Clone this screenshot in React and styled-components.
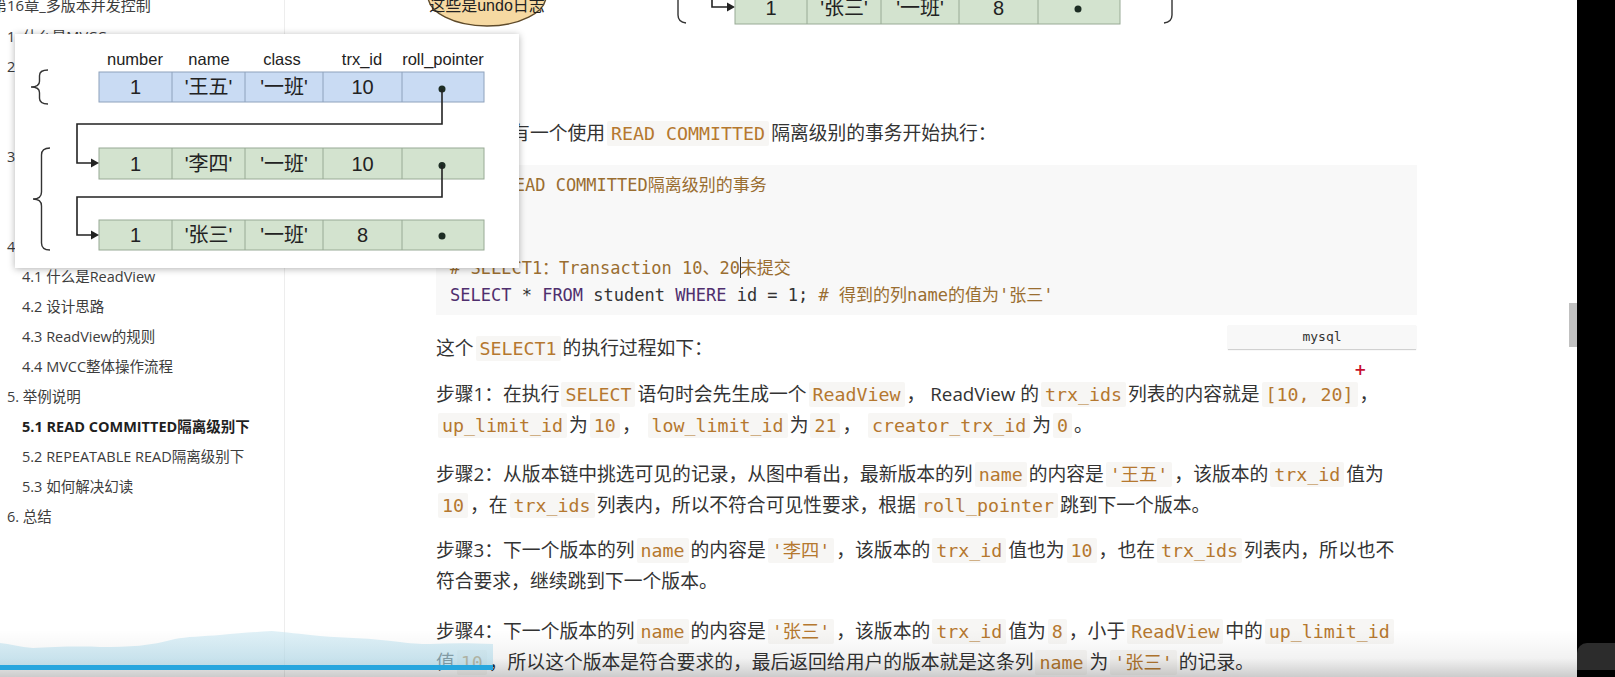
import React from 'react'
import styled, { createGlobalStyle } from 'styled-components'

const GlobalStyle = createGlobalStyle`
  html, body {
    margin: 0;
    padding: 0;
    background: #fff;
  }
  body {
    font-family: 'Open Sans', 'Noto Sans CJK SC', sans-serif;
  }
`

const outline = [
  { title: '1. 什么是MVCC', level: 1 },
  { title: '2. 快照读与当前读', level: 1 },
  { title: '2.1 快照读', level: 2 },
  { title: '2.2 当前读', level: 2 },
  { title: '3. 复习', level: 1 },
  { title: '3.1 再谈隔离级别', level: 2 },
  { title: '3.2 隐藏字段、Undo Log版本链', level: 2 },
  { title: '4. MVCC实现原理之ReadView', level: 1 },
  { title: '4.1 什么是ReadView', level: 2 },
  { title: '4.2 设计思路', level: 2 },
  { title: '4.3 ReadView的规则', level: 2 },
  { title: '4.4 MVCC整体操作流程', level: 2 },
  { title: '5. 举例说明', level: 1 },
  { title: '5.1 READ COMMITTED隔离级别下', level: 2, active: true },
  { title: '5.2 REPEATABLE READ隔离级别下', level: 2 },
  { title: '5.3 如何解决幻读', level: 2 },
  { title: '6. 总结', level: 1 }
]

const Screen = styled.div`
  position: relative;
  display: flex;
  width: 1615px;
  height: 677px;
  overflow: hidden;
  background: #fff;
`

const Sidebar = styled.aside`
  flex: none;
  width: 284px;
  border-right: 1px solid #ededed;
  color: #3c3c3c;
  font-size: 14.5px;
`

const OutlineTitle = styled.div`
  height: 27px;
  margin: -8px 0 0 -8px;
  font-size: 15px;
  line-height: 27px;
  white-space: nowrap;
`

const OutlineList = styled.ul`
  margin: 3px 0 0;
  padding: 0;
  list-style: none;
`

const OutlineItem = styled.li`
  height: 30px;
  padding-left: ${({ $level }) => ($level === 2 ? '22px' : '7px')};
  color: ${({ $active }) => ($active ? '#1f1f1f' : '#3c3c3c')};
  font-weight: ${({ $active }) => ($active ? 700 : 400)};
  line-height: 30px;
  white-space: nowrap;
`

const Main = styled.main`
  position: relative;
  flex: 1;
  min-width: 0;
`

const Article = styled.article`
  width: 981px;
  margin-left: 151px;
  color: #333;
  font-size: 18.8px;
  line-height: 31px;
`

const Figure = styled.svg`
  display: block;
  overflow: visible;
`

const Para = styled.p`
  margin: ${({ $gap = 17 }) => `${$gap}px 0 0`};
  white-space: nowrap;
`

const Code = styled.code`
  margin: 0 2px;
  padding: 2px 4px;
  border-radius: 2px;
  background: #f7f6f4;
  color: #b5782f;
  font-family: 'DejaVu Sans Mono', 'Noto Sans CJK SC', monospace;
  font-size: 18.3px;
  line-height: 1;
`

const CodeWrap = styled.div`
  position: relative;
  margin-top: 16px;
`

const CodeBlock = styled.pre`
  box-sizing: border-box;
  height: 150px;
  margin: 0;
  padding: 7px 14px 0;
  background: #f8f8f8;
  color: #333;
  font-family: 'DejaVu Sans Mono', 'Noto Sans CJK SC', monospace;
  font-size: 17px;
  line-height: 27.5px;
`

const Keyword = styled.span`
  color: #4f2f6e;
`

const Comment = styled.span`
  color: #9a6e31;
`

const Caret = styled.span`
  display: inline-block;
  width: 1px;
  height: 21px;
  margin-right: -1px;
  background: #333;
  vertical-align: -4px;
`

const LangTag = styled.div`
  position: absolute;
  right: 1px;
  bottom: -34px;
  width: 188px;
  height: 24px;
  background: #f8f8f8;
  box-shadow: 0 1px 1px rgba(0, 0, 0, 0.18);
  color: #333;
  font-family: 'DejaVu Sans Mono', monospace;
  font-size: 13px;
  line-height: 24px;
  text-align: center;
`

const Cursor = styled.span`
  position: absolute;
  top: 361px;
  left: 1069px;
  color: #c8102e;
  font-family: 'DejaVu Sans', sans-serif;
  font-size: 15px;
  font-weight: 700;
`

const ScrollTrack = styled.div`
  flex: none;
  width: 8px;
`

const ScrollThumb = styled.div`
  height: 44px;
  margin-top: 303px;
  background: #c1c1c1;
`

const Outside = styled.div`
  display: flex;
  flex: none;
  flex-direction: column;
  justify-content: flex-end;
  width: 38px;
  background: #000;
`

const OutsideKnob = styled.div`
  height: 27px;
  margin-bottom: 7px;
  border-radius: 10px 0 0 0;
  background: #2c2c2c;
`

const Preview = styled.div`
  position: absolute;
  top: 34px;
  left: 15px;
  width: 504px;
  height: 234px;
  background: #fff;
  box-shadow: 0 1px 7px rgba(0, 0, 0, 0.3);
`

const PlayerOverlay = styled.div`
  position: absolute;
  bottom: 0;
  left: 0;
  width: 1577px;
  height: 47px;
  background: linear-gradient(to bottom, rgba(0, 0, 0, 0) 0%, rgba(0, 0, 0, 0.05) 60%, rgba(0, 0, 0, 0.2) 100%);
`

const HeatMap = styled.svg`
  display: block;
`

const Progress = styled.div`
  width: 493px;
  height: 5px;
  background: #27a6de;
`

const DIAGRAM_FONT = "'Liberation Sans', 'Noto Sans CJK SC', sans-serif"

const brace = (x, y1, y2, w, dir = 1) => {
  const mid = (y1 + y2) / 2
  const r = Math.min(7, (y2 - y1) / 6)
  const edge = x + w * dir
  const spine = x + (w / 2) * dir
  return `M ${edge} ${y1} Q ${spine} ${y1} ${spine} ${y1 + r} L ${spine} ${mid - r} Q ${spine} ${mid} ${x} ${mid} Q ${spine} ${mid} ${spine} ${mid + r} L ${spine} ${y2 - r} Q ${spine} ${y2} ${edge} ${y2}`
}

const RecordRow = ({ cols, y, h, values, fill, stroke, last }) => {
  const cy = y + h / 2
  return (
    <g>
      <rect x={cols[0]} y={y} width={cols[5] - cols[0]} height={h} fill={fill} stroke={stroke} />
      {cols.slice(1, 5).map(c => (
        <line key={c} x1={c} y1={y} x2={c} y2={y + h} stroke={stroke} />
      ))}
      {values.map((v, i) => (
        <text
          key={i}
          x={(cols[i] + cols[i + 1]) / 2}
          y={cy + 7}
          textAnchor='middle'
          fontSize='20'
          fontFamily={DIAGRAM_FONT}
          fill='#222'
        >
          {v}
        </text>
      ))}
      <circle cx={cols[4] + 40} cy={last ? cy + 1 : cy + 2} r='3.5' fill='#1d2d24' />
    </g>
  )
}

const Arrow = ({ d, tipX, tipY }) => (
  <g>
    <path d={d} fill='none' stroke='#222' strokeWidth='1.6' />
    <polygon points={`${tipX - 8},${tipY - 4.5} ${tipX},${tipY} ${tipX - 8},${tipY + 4.5}`} fill='#222' />
  </g>
)

const previewCols = [84, 157, 230, 308, 387, 469]
const headers = [
  ['number', 120],
  ['name', 194],
  ['class', 267],
  ['trx_id', 347],
  ['roll_pointer', 428]
]

const VersionChain = () => (
  <svg width='504' height='234' viewBox='0 0 504 234'>
    {headers.map(([label, x]) => (
      <text key={label} x={x} y='31' textAnchor='middle' fontSize='16.5' fontFamily={DIAGRAM_FONT} fill='#222'>
        {label}
      </text>
    ))}
    <RecordRow cols={previewCols} y={38} h={30} values={['1', "'王五'", "'一班'", '10']} fill='#c9dbf3' stroke='#8ea2bc' />
    <RecordRow cols={previewCols} y={114} h={31} values={['1', "'李四'", "'一班'", '10']} fill='#d3e3cf' stroke='#98aa95' />
    <RecordRow cols={previewCols} y={186} h={30} values={['1', "'张三'", "'一班'", '8']} fill='#d3e3cf' stroke='#98aa95' last />
    <Arrow d='M 427 55 V 90 H 62 V 129 H 78' tipX={84} tipY={129} />
    <Arrow d='M 427 131 V 163 H 62 V 201 H 78' tipX={84} tipY={201} />
    <path d={brace(16, 36, 70, 17)} fill='none' stroke='#333' strokeWidth='1.4' />
    <path d={brace(18, 114, 216, 17)} fill='none' stroke='#333' strokeWidth='1.4' />
  </svg>
)

const topCols = [299, 371, 445, 523, 602, 684]

const FigureTail = () => (
  <Figure width='981' height='28' viewBox='0 0 981 28'>
    <ellipse cx='51' cy='-4' rx='59' ry='30' fill='#f6d9a2' stroke='#5e4a2a' strokeWidth='1.4' />
    <text x='51' y='11' textAnchor='middle' fontSize='16' fontFamily={DIAGRAM_FONT} fill='#222'>
      这些是undo日志
    </text>
    <path d='M 242 -10 V 15 Q 242 22 250 23' fill='none' stroke='#333' strokeWidth='1.4' />
    <path d='M 736 -10 V 15 Q 736 22 728 23' fill='none' stroke='#333' strokeWidth='1.4' />
    <Arrow d='M 276 -10 V 7 H 293' tipX={299} tipY={7} />
    <RecordRow cols={topCols} y={-8} h={32} values={['1', "'张三'", "'一班'", '8']} fill='#d3e3cf' stroke='#98aa95' last />
  </Figure>
)

const Heat = () => (
  <HeatMap width='493' height='35' viewBox='0 0 493 35'>
    <defs>
      <linearGradient id='heat' x1='0' y1='0' x2='0' y2='1'>
        <stop offset='0' stopColor='#cde8f2' />
        <stop offset='1' stopColor='#a9d6e7' />
      </linearGradient>
    </defs>
    <path
      d='M 0 13 C 10 14 20 17 33 18 C 50 17 80 16 100 17 C 130 17 150 16 175 9 C 185 7 205 6 220 5 C 240 3 255 2 272 1 C 285 2 300 4 320 6 C 345 8 370 8 400 12 C 415 14 425 14 430 14 C 450 13 470 13 493 14 L 493 35 L 0 35 Z'
      fill='url(#heat)'
      fillOpacity='0.62'
    />
  </HeatMap>
)

const App = () => (
  <Screen>
    <GlobalStyle />
    <Sidebar>
      <OutlineTitle>第16章_多版本并发控制</OutlineTitle>
      <OutlineList>
        {outline.map(item => (
          <OutlineItem key={item.title} $level={item.level} $active={item.active}>
            {item.title}
          </OutlineItem>
        ))}
      </OutlineList>
    </Sidebar>

    <Main>
      <Article>
        <FigureTail />
        <Para $gap={90}>
          假设现在有一个使用<Code>READ COMMITTED</Code>隔离级别的事务开始执行：
        </Para>
        <CodeWrap>
          <CodeBlock>
            <Comment># 使用READ COMMITTED隔离级别的事务</Comment>
            {'\n'}
            <Keyword>BEGIN</Keyword>;
            {'\n\n'}
            <Comment>
              # SELECT1：Transaction 10、20<Caret />未提交
            </Comment>
            {'\n'}
            <Keyword>SELECT</Keyword> * <Keyword>FROM</Keyword> student <Keyword>WHERE</Keyword> id = 1;{' '}
            <Comment># 得到的列name的值为'张三'</Comment>
          </CodeBlock>
          <LangTag>mysql</LangTag>
        </CodeWrap>
        <Para $gap={18}>
          这个<Code>SELECT1</Code>的执行过程如下：
        </Para>
        <Para $gap={15}>
          步骤1：在执行<Code>SELECT</Code>语句时会先生成一个<Code>ReadView</Code>， ReadView 的<Code>trx_ids</Code>列表的内容就是<Code>[10, 20]</Code>，
          <br />
          <Code>up_limit_id</Code>为<Code>10</Code>， <Code>low_limit_id</Code>为<Code>21</Code>， <Code>creator_trx_id</Code>为<Code>0</Code>。
        </Para>
        <Para $gap={18}>
          步骤2：从版本链中挑选可见的记录，从图中看出，最新版本的列<Code>name</Code>的内容是<Code>'王五'</Code>，该版本的<Code>trx_id</Code>值为
          <br />
          <Code>10</Code>，在<Code>trx_ids</Code>列表内，所以不符合可见性要求，根据<Code>roll_pointer</Code>跳到下一个版本。
        </Para>
        <Para $gap={14}>
          步骤3：下一个版本的列<Code>name</Code>的内容是<Code>'李四'</Code>，该版本的<Code>trx_id</Code>值也为<Code>10</Code>，也在<Code>trx_ids</Code>列表内，所以也不
          <br />
          符合要求，继续跳到下一个版本。
        </Para>
        <Para $gap={19}>
          步骤4：下一个版本的列<Code>name</Code>的内容是<Code>'张三'</Code>，该版本的<Code>trx_id</Code>值为<Code>8</Code>，小于<Code>ReadView</Code>中的<Code>up_limit_id</Code>
          <br />
          值<Code>10</Code>，所以这个版本是符合要求的，最后返回给用户的版本就是这条列<Code>name</Code>为<Code>'张三'</Code>的记录。
        </Para>
      </Article>
      <Cursor>+</Cursor>
    </Main>

    <ScrollTrack>
      <ScrollThumb />
    </ScrollTrack>
    <Outside>
      <OutsideKnob />
    </Outside>

    <Preview>
      <VersionChain />
    </Preview>

    <PlayerOverlay>
      <Heat />
      <Progress />
    </PlayerOverlay>
  </Screen>
)

export default App
